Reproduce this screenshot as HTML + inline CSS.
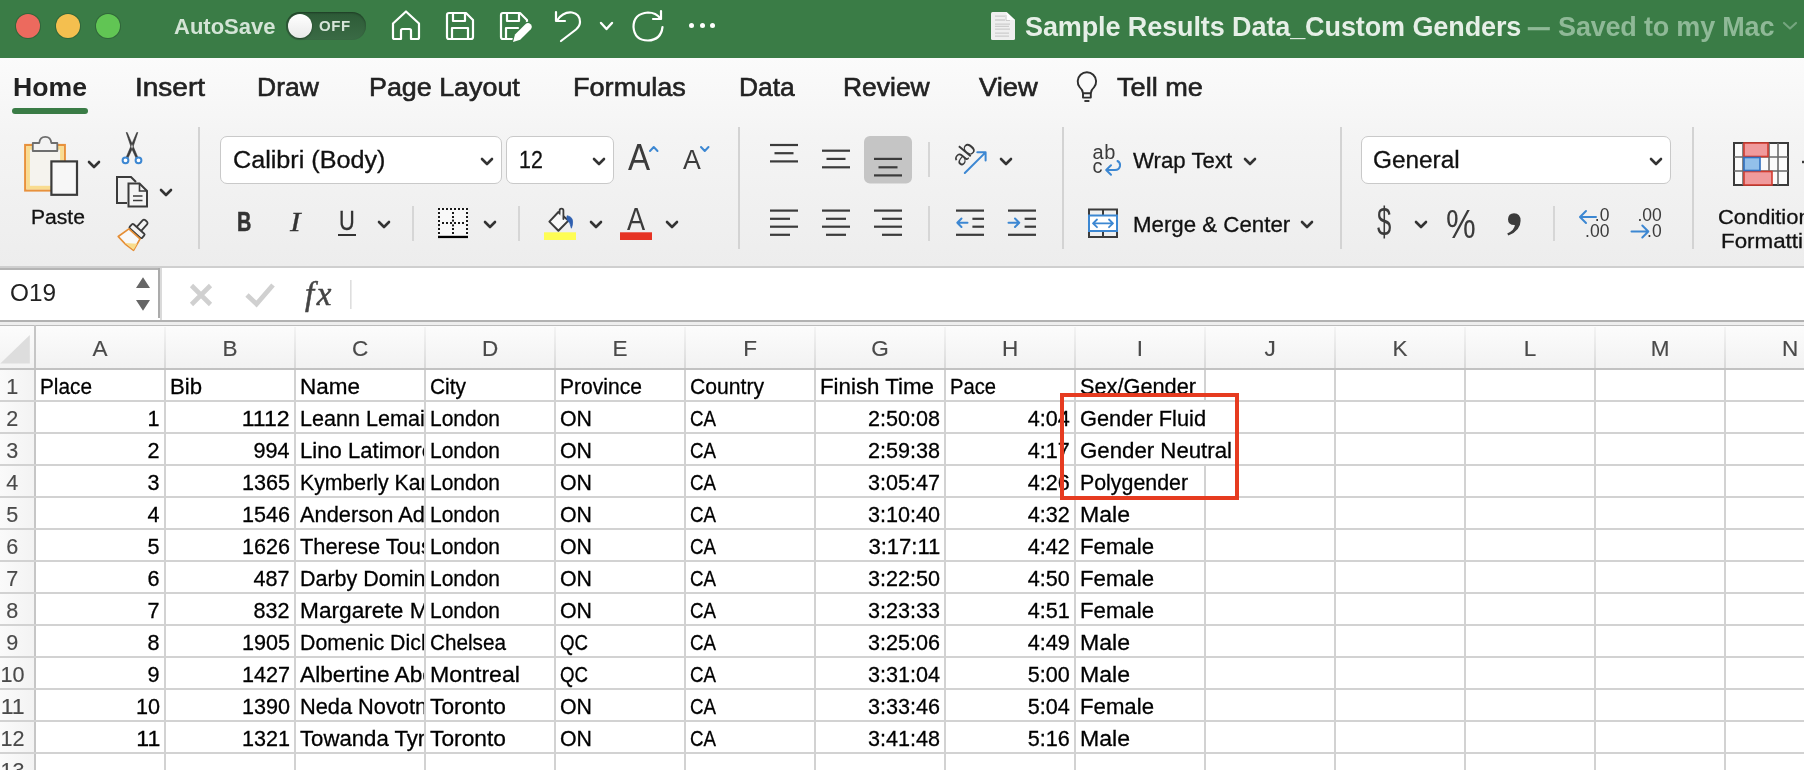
<!DOCTYPE html>
<html lang="en"><head><meta charset="utf-8"><title>Sample Results Data_Custom Genders</title>
<style>
*{margin:0;padding:0;box-sizing:border-box}
html,body{width:1804px;height:770px;overflow:hidden;background:#f0f0f0;font-family:"Liberation Sans",sans-serif;color:#1f1f1f}
#app{position:absolute;left:0;top:0;width:1804px;height:770px;overflow:hidden;will-change:transform}
.abs,.t,svg.i{position:absolute}
.t{white-space:nowrap;line-height:1}
#title{position:absolute;left:0;top:0;width:1804px;height:58px;background:#3a7c46}
#tabs{position:absolute;left:0;top:58px;width:1804px;height:208px;background:linear-gradient(#fbfbfb 0,#f4f4f4 38%,#ededed 100%)}
#ribbon{display:none}
.dot{position:absolute;top:14px;width:24px;height:24px;border-radius:50%}
.tab{position:absolute;top:71.5px;font-size:26px;line-height:30px;color:#222;-webkit-text-stroke:0.6px #222;white-space:nowrap;transform-origin:0 50%}
.vsep{position:absolute;width:2px;background:#d3d3d3;top:127px;height:122px}
.ssep{position:absolute;width:2px;background:#d6d6d6;top:206px;height:35px}
.box{position:absolute;top:136px;height:48px;background:#fff;border:1.5px solid #c9c9c9;border-radius:7px}
.rt{position:absolute;white-space:nowrap;color:#111;line-height:1;transform-origin:0 50%;-webkit-text-stroke:0.3px}
svg.i{overflow:visible}
.chev{position:absolute;width:12px;height:8px;overflow:visible}

.hd{font-size:22.5px;line-height:25.85px;color:#4a4a4a;text-align:center;-webkit-text-stroke:0.15px #4a4a4a}
.c{position:absolute;width:128px;height:30px;overflow:hidden;white-space:nowrap;font-size:22.5px;line-height:25.85px;color:#000;padding-top:3.6px;-webkit-text-stroke:0.3px #000}
.c span{display:inline-block}
.c.l{padding-left:4.4px}.c.l span{transform-origin:0 50%}
.c.r{text-align:right;padding-right:4px}.c.r span{transform-origin:100% 50%}
</style></head><body>
<div id="app"><div id="title">
<div class="dot" style="left:16px;background:#ec6a5e;box-shadow:0 0 0 1px rgba(0,0,0,.18)"></div>
<div class="dot" style="left:56px;background:#f4bf4f;box-shadow:0 0 0 1px rgba(0,0,0,.18)"></div>
<div class="dot" style="left:96px;background:#61c554;box-shadow:0 0 0 1px rgba(0,0,0,.18)"></div>
<div class="t" style="left:174px;top:14px;font-size:22px;line-height:26px;font-weight:bold;color:#d3e4d6;letter-spacing:0px">AutoSave</div>
<div class="abs" style="left:286px;top:12px;width:80px;height:28px;border-radius:14px;background:linear-gradient(#2c5a36,#3a6b45);box-shadow:inset 0 1px 2px rgba(0,0,0,.35)"></div>
<div class="abs" style="left:288px;top:14px;width:24px;height:24px;border-radius:50%;background:linear-gradient(#ffffff,#e9e9e9);box-shadow:0 1px 2px rgba(0,0,0,.4)"></div>
<div class="t" style="left:319px;top:18px;font-size:15px;line-height:16px;font-weight:bold;color:#d6e5d9;letter-spacing:0.6px">OFF</div>
<svg class="i" style="left:390px;top:8px" width="32" height="34" viewBox="0 0 32 34"><path d="M3 15.5 L16 3.5 L29 15.5 V29.5 Q29 31 27.5 31 H21 V22.5 Q21 21 19.5 21 H12.5 Q11 21 11 22.5 V31 H4.5 Q3 31 3 29.5 Z" stroke="#fff" fill="none" stroke-width="2.2" stroke-linejoin="round" stroke-linecap="round"/></svg>
<svg class="i" style="left:444px;top:10px" width="32" height="32" viewBox="0 0 32 32"><path d="M5 3 H22 L29 10 V27 Q29 29 27 29 H5 Q3 29 3 27 V5 Q3 3 5 3 Z" stroke="#fff" fill="none" stroke-width="2.2" stroke-linejoin="round" stroke-linecap="round"/><path d="M9 3 V11 H21 V3" stroke="#fff" fill="none" stroke-width="2.2" stroke-linejoin="round" stroke-linecap="round"/><path d="M8 29 V18 H24 V29" stroke="#fff" fill="none" stroke-width="2.2" stroke-linejoin="round" stroke-linecap="round"/></svg>
<svg class="i" style="left:498px;top:10px" width="36" height="34" viewBox="0 0 36 34"><path d="M16 29 H5 Q3 29 3 27 V5 Q3 3 5 3 H22 L29 10 V14" stroke="#fff" fill="none" stroke-width="2.2" stroke-linejoin="round" stroke-linecap="round"/><path d="M9 3 V11 H21 V3" stroke="#fff" fill="none" stroke-width="2.2" stroke-linejoin="round" stroke-linecap="round"/><path d="M8 29 V18 H20" stroke="#fff" fill="none" stroke-width="2.2" stroke-linejoin="round" stroke-linecap="round"/><path d="M15 32 L17 24.6 L27.6 14 Q30 11.9 32.6 14.2 Q34.9 16.8 32.8 19.2 L22.2 29.8 Z" fill="#fff" stroke="#3a7c46" stroke-width="2.4" stroke-linejoin="round" paint-order="stroke"/></svg>
<svg class="i" style="left:553px;top:8px" width="32" height="36" viewBox="0 0 32 36"><path d="M3 4 V13 H12" stroke="#fff" fill="none" stroke-width="2.2" stroke-linejoin="round" stroke-linecap="round"/><path d="M4 12.5 Q10 3.5 19 4.5 Q27 6 27 14 Q27 18 23 21.5 L8 33" stroke="#fff" fill="none" stroke-width="2.2" stroke-linejoin="round" stroke-linecap="round"/></svg>
<svg class="chev" style="left:600px;top:22px;width:13px;height:8px" viewBox="0 0 13 8"><polyline points="1,1 6.5,7 12,1" fill="none" stroke="#fff" stroke-width="2.4" stroke-linecap="round" stroke-linejoin="round"/></svg>
<svg class="i" style="left:630px;top:8px" width="36" height="36" viewBox="0 0 36 36"><path d="M31 3 V11 H23" stroke="#fff" fill="none" stroke-width="2.2" stroke-linejoin="round" stroke-linecap="round"/><path d="M30.5 10.5 Q26 4.5 18 4.5 Q3.5 5.5 3.5 19 Q4.5 32.5 18 32.5 Q31 32 32.5 19" stroke="#fff" fill="none" stroke-width="2.2" stroke-linejoin="round" stroke-linecap="round"/></svg>
<div class="abs" style="left:689px;top:23.2px;width:5px;height:5px;border-radius:50%;background:#fff"></div>
<div class="abs" style="left:699.5px;top:23.2px;width:5px;height:5px;border-radius:50%;background:#fff"></div>
<div class="abs" style="left:710px;top:23.2px;width:5px;height:5px;border-radius:50%;background:#fff"></div>
<svg class="i" style="left:990px;top:11px" width="26" height="30" viewBox="0 0 26 30"><path d="M2.5 1 H16.5 L25 9 V27.5 Q25 29 23.5 29 H2.5 Q1 29 1 27.5 V2.5 Q1 1 2.5 1 Z" fill="#efefef"/><path d="M16.5 1 V7.5 Q16.5 9 18 9 H25 Z" fill="#fdfdfd"/><path d="M16 4 V9.5 H20" fill="none" stroke="#c4c4c4" stroke-width="0.8"/><g stroke="#cdcdcd" stroke-width="1.3"><path d="M5 5.2 H15 M5 9 H15 M5 13.1 H20 M5 15.3 H19 M5 18.2 H20 M5 22.1 H19 M5 25.2 H19"/></g></svg>
<div class="t" style="left:1025px;top:11.5px;font-size:27px;line-height:30px;font-weight:bold;color:#e6efe7;letter-spacing:-0.1px" id="ttl">Sample Results Data_Custom Genders</div>
<div class="t" style="left:1528px;top:11.5px;font-size:27px;line-height:30px;font-weight:bold;color:#8fb997;letter-spacing:-0.2px" id="ttl2"><span style="display:inline-block;transform:scaleX(0.8);transform-origin:0 50%;margin-right:-4px;-webkit-text-stroke:0.5px">—</span> Saved to my Mac</div>
<svg class="chev" style="left:1783px;top:22px;width:14px;height:7.5px" viewBox="0 0 14 7.5"><polyline points="1,1 7.0,6.5 13,1" fill="none" stroke="#74a57e" stroke-width="2.2" stroke-linecap="round" stroke-linejoin="round"/></svg>
</div><div id="tabs"></div>
<div class="tab" style="transform:scaleX(1.024);left:13.00px;font-weight:bold;-webkit-text-stroke:0;">Home</div>
<div class="tab" style="transform:scaleX(1.077);left:135.00px;">Insert</div>
<div class="tab" style="transform:scaleX(1.019);left:257.00px;">Draw</div>
<div class="tab" style="transform:scaleX(1.033);left:369.00px;">Page Layout</div>
<div class="tab" style="transform:scaleX(1.042);left:573.00px;">Formulas</div>
<div class="tab" style="transform:scaleX(1.016);left:739.00px;">Data</div>
<div class="tab" style="transform:scaleX(1.017);left:843.00px;">Review</div>
<div class="tab" style="transform:scaleX(1.051);left:979.00px;">View</div>
<div class="tab" style="transform:scaleX(1.043);left:1117.00px;">Tell me</div>
<div class="abs" style="left:12px;top:108px;width:76px;height:6px;border-radius:3px;background:#3a7c46"></div>
<svg class="i" style="left:1074px;top:70px" width="26" height="36" viewBox="0 0 26 36"><path d="M9 23.2 Q8.8 20 5.85 17.41 A9.2 9.2 0 1 1 19.95 17.41 Q17 20 16.8 23.2 Z" fill="#f9f9f9" stroke="#2e2e2e" stroke-width="1.9" stroke-linejoin="round"/><path d="M9 23.2 V27.6 H16.8 V23.2" fill="none" stroke="#2e2e2e" stroke-width="1.9" stroke-linejoin="round"/><path d="M10.4 31 H15.4" stroke="#2e2e2e" stroke-width="1.9"/></svg><div id="ribbon"></div>
<svg class="i" style="left:0;top:0" width="1804" height="270" viewBox="0 0 1804 270">
<rect x="25.2" y="145" width="39.6" height="45.5" fill="#f5f3ee" stroke="#e8913c" stroke-width="2.2"/><rect x="28.1" y="147.9" width="33.8" height="39.7" fill="none" stroke="#f9dc90" stroke-width="3.6"/>
<path d="M32.8 151 V143 H39.3 Q39.8 136.8 45.3 136.8 Q50.8 136.8 51.3 143 H57.3 V151 Z" fill="#f3f3f3" stroke="#6e6e6e" stroke-width="1.8" stroke-linejoin="round"/>
<rect x="51.4" y="161.4" width="25.6" height="33.4" fill="#f7f7f7" stroke="#3b3b3b" stroke-width="2.2"/>
<path d="M126.2 132.5 L127.2 132.5 L134.3 149 L137.8 157.3 L136 158 L131.2 147.5 Z M137.8 132.5 L136.8 132.5 L129.7 149 L126.2 157.3 L128 158 L132.8 147.5 Z" fill="#3b3b3b" stroke="#3b3b3b" stroke-width="0.6" stroke-linejoin="round"/>
<circle cx="125.5" cy="160.3" r="2.9" fill="#fff" stroke="#3c87d2" stroke-width="2"/><circle cx="138.5" cy="160.3" r="2.9" fill="#fff" stroke="#3c87d2" stroke-width="2"/>
<path d="M127 203 H117 V177 H131 L136 182" fill="none" stroke="#3b3b3b" stroke-width="2" stroke-linejoin="miter"/>
<path d="M128.5 183.5 H139.5 L147 191 V206.5 H128.5 Z" fill="#f4f4f4" stroke="#3b3b3b" stroke-width="2" stroke-linejoin="miter"/><path d="M139.5 183.5 V191 H147" fill="none" stroke="#3b3b3b" stroke-width="1.6"/><path d="M133 196 H142.5 M133 200.5 H142.5" stroke="#3b3b3b" stroke-width="1.6"/>
<g transform="translate(132.75,235.8) rotate(42)"><rect x="-3" y="-20" width="6" height="12" rx="2" fill="#f4f4f4" stroke="#3b3b3b" stroke-width="1.8"/><rect x="-8.3" y="-9.2" width="16.6" height="5.6" rx="1.2" fill="#f4f4f4" stroke="#3b3b3b" stroke-width="1.8"/><path d="M-7.5 -2.6 H7.5 L10.3 10.3 Q0 12 -10.3 10.3 Z" fill="#f8f8f8" stroke="#e58e35" stroke-width="1.7" stroke-linejoin="round"/><path d="M-1 10.6 L10 9.8 L8.6 3 Z" fill="#f9dc8c"/></g>
<rect x="438" y="208" width="30" height="28" fill="#f9f9f9"/><g fill="#1a1a1a"><rect x="438" y="208" width="2" height="2"/><rect x="442" y="208" width="2" height="2"/><rect x="446" y="208" width="2" height="2"/><rect x="450" y="208" width="2" height="2"/><rect x="454" y="208" width="2" height="2"/><rect x="458" y="208" width="2" height="2"/><rect x="462" y="208" width="2" height="2"/><rect x="466" y="208" width="2" height="2"/><rect x="438" y="212" width="2" height="2"/><rect x="466" y="212" width="2" height="2"/><rect x="452" y="212" width="2" height="2"/><rect x="438" y="216" width="2" height="2"/><rect x="466" y="216" width="2" height="2"/><rect x="452" y="216" width="2" height="2"/><rect x="438" y="220" width="2" height="2"/><rect x="466" y="220" width="2" height="2"/><rect x="438" y="224" width="2" height="2"/><rect x="466" y="224" width="2" height="2"/><rect x="438" y="228" width="2" height="2"/><rect x="466" y="228" width="2" height="2"/><rect x="452" y="228" width="2" height="2"/><rect x="438" y="232" width="2" height="2"/><rect x="466" y="232" width="2" height="2"/><rect x="452" y="232" width="2" height="2"/><rect x="442" y="222" width="2" height="2"/><rect x="446" y="222" width="2" height="2"/><rect x="450" y="222" width="2" height="2"/><rect x="454" y="222" width="2" height="2"/><rect x="458" y="222" width="2" height="2"/><rect x="462" y="222" width="2" height="2"/><rect x="452" y="219.6" width="2" height="2"/><rect x="452" y="224.4" width="2" height="2"/></g><rect x="438" y="235.8" width="30" height="2.3" fill="#000"/>
<path d="M549.4 221.6 L558.4 212 L568.4 220.6 L558.4 230.8 Z" fill="#f8f8f8" stroke="#3b3b3b" stroke-width="2" stroke-linejoin="round"/><path d="M559.6 213.5 V210.6 Q559.6 208.7 561.5 208.7 Q563.4 208.7 563.4 210.6 V219" fill="#f8f8f8" stroke="#3b3b3b" stroke-width="1.8" stroke-linecap="round"/><path d="M567 215.8 Q572.6 216.5 572.6 222 Q572.6 225 571.4 228.2 Q570.5 222.5 567 219.8 Z" fill="#2f5fb0" stroke="#2f5fb0" stroke-width="0.8" stroke-linejoin="round"/>
<rect x="544" y="232.3" width="32" height="7.7" fill="#fefd54"/>
<rect x="620" y="232.3" width="32" height="7.7" fill="#e63323"/>
<rect x="770.0" y="143.9" width="28" height="2.2" fill="#3b3b3b"/><rect x="774.5" y="152.1" width="19" height="2.2" fill="#3b3b3b"/><rect x="770.0" y="160.3" width="28" height="2.2" fill="#3b3b3b"/>
<rect x="822.0" y="149.6" width="28" height="2.2" fill="#3b3b3b"/><rect x="826.5" y="157.8" width="19" height="2.2" fill="#3b3b3b"/><rect x="822.0" y="166.20000000000002" width="28" height="2.2" fill="#3b3b3b"/>
<rect x="864" y="136" width="48" height="47.5" rx="6" fill="#c5c5c5"/>
<rect x="874.0" y="157.8" width="28" height="2.2" fill="#3b3b3b"/><rect x="878.5" y="166.20000000000002" width="19" height="2.2" fill="#3b3b3b"/><rect x="874.0" y="174.3" width="28" height="2.2" fill="#3b3b3b"/>
<rect x="770" y="209.5" width="28" height="2.2" fill="#3b3b3b"/><rect x="770" y="217.70000000000002" width="20" height="2.2" fill="#3b3b3b"/><rect x="770" y="225.6" width="28" height="2.2" fill="#3b3b3b"/><rect x="770" y="233.70000000000002" width="20" height="2.2" fill="#3b3b3b"/>
<rect x="822.0" y="209.5" width="28" height="2.2" fill="#3b3b3b"/><rect x="826.0" y="217.70000000000002" width="20" height="2.2" fill="#3b3b3b"/><rect x="822.0" y="225.6" width="28" height="2.2" fill="#3b3b3b"/><rect x="826.0" y="233.70000000000002" width="20" height="2.2" fill="#3b3b3b"/>
<rect x="874" y="209.5" width="28" height="2.2" fill="#3b3b3b"/><rect x="882" y="217.70000000000002" width="20" height="2.2" fill="#3b3b3b"/><rect x="874" y="225.6" width="28" height="2.2" fill="#3b3b3b"/><rect x="882" y="233.70000000000002" width="20" height="2.2" fill="#3b3b3b"/>
<rect x="956" y="209.5" width="28" height="2.2" fill="#3b3b3b"/><rect x="972.4" y="217.70000000000002" width="11.6" height="2.2" fill="#3b3b3b"/><rect x="972.4" y="225.6" width="11.6" height="2.2" fill="#3b3b3b"/><rect x="956" y="233.70000000000002" width="28" height="2.2" fill="#3b3b3b"/>
<path d="M967.5 222.7 H957.3 M961.5 218.5 L957.3 222.7 L961.5 227" fill="none" stroke="#3c87d2" stroke-width="2" stroke-linecap="round" stroke-linejoin="round"/>
<rect x="1008" y="209.5" width="28" height="2.2" fill="#3b3b3b"/><rect x="1024.6" y="217.70000000000002" width="11.4" height="2.2" fill="#3b3b3b"/><rect x="1024.6" y="225.6" width="11.4" height="2.2" fill="#3b3b3b"/><rect x="1008" y="233.70000000000002" width="28" height="2.2" fill="#3b3b3b"/>
<path d="M1008.5 222.7 H1019 M1015 218.5 L1019.2 222.7 L1015 227" fill="none" stroke="#3c87d2" stroke-width="2" stroke-linecap="round" stroke-linejoin="round"/>
<text x="0" y="0" transform="translate(961.5,167.2) rotate(-50)" font-family="Liberation Sans, sans-serif" font-size="21.5" fill="#3b3b3b">ab</text>
<path d="M964.8 173 L985.3 152.6 M977.3 152.3 H985.6 V160.6" fill="none" stroke="#3c87d2" stroke-width="2" stroke-linecap="round" stroke-linejoin="round"/>
<text x="1092.5" y="159" font-family="Liberation Sans, sans-serif" font-size="20" fill="#3b3b3b" letter-spacing="0.6">ab</text><text x="1092.5" y="173.3" font-family="Liberation Sans, sans-serif" font-size="20" fill="#3b3b3b">c</text>
<path d="M1117.5 161 Q1120.5 162.5 1120 166 Q1119.3 170 1115 170 H1106.5 M1111 165.3 L1106.2 170 L1111 174.8" fill="none" stroke="#3c87d2" stroke-width="2" stroke-linecap="round" stroke-linejoin="round"/>
<g fill="none" stroke="#3b3b3b" stroke-width="2"><path d="M1089 216 V209.5 H1117 V216 M1103 209.5 V216 M1089 231 V237 H1117 V231 M1103 231 V237"/></g><rect x="1089" y="215.5" width="28" height="15.5" fill="#fff" stroke="#3c87d2" stroke-width="2"/><path d="M1093 223.3 H1113 M1097 219.5 L1093 223.3 L1097 227.2 M1109 219.5 L1113 223.3 L1109 227.2" fill="none" stroke="#3c87d2" stroke-width="1.8" stroke-linecap="round" stroke-linejoin="round"/>
<text x="1594.8" y="220.9" font-family="Liberation Sans, sans-serif" font-size="17.5" fill="#3b3b3b">.0</text><text x="1585.1" y="237.1" font-family="Liberation Sans, sans-serif" font-size="17.5" fill="#3b3b3b">.00</text>
<path d="M1596 217 H1580.3 M1586 211 L1580 217 L1586 223" fill="none" stroke="#3c87d2" stroke-width="2" stroke-linecap="round" stroke-linejoin="round"/>
<text x="1637.4" y="220.9" font-family="Liberation Sans, sans-serif" font-size="17.5" fill="#3b3b3b">.00</text><text x="1647.1" y="237.1" font-family="Liberation Sans, sans-serif" font-size="17.5" fill="#3b3b3b">.0</text>
<path d="M1631.5 231.5 H1648 M1642.3 225.5 L1648.3 231.5 L1642.3 237.5" fill="none" stroke="#3c87d2" stroke-width="2" stroke-linecap="round" stroke-linejoin="round"/>
<rect x="1734" y="143" width="54" height="42" fill="#fbfbfb" stroke="#3b3b3b" stroke-width="2"/><path d="M1734 157 H1788 M1734 171 H1788 M1743 143 V185 M1769 143 V185 M1778 143 V185" stroke="#6a6a6a" stroke-width="1.6" fill="none"/>
<rect x="1744" y="143" width="24" height="13.5" fill="#f09a9c" stroke="#d23b30" stroke-width="1.6"/><rect x="1744" y="171.5" width="28" height="13.5" fill="#f09a9c" stroke="#d23b30" stroke-width="1.6"/><rect x="1744" y="157.5" width="16" height="13" fill="#93c0ea" stroke="#2f6fc0" stroke-width="1.6"/>
<rect x="1802" y="160.8" width="3" height="2.4" fill="#3b3b3b"/>
<path d="M1514 213.2 Q1520.6 213.2 1520.6 220.8 Q1520.6 230.8 1508.3 235.6 L1507.2 233.5 Q1514.6 230 1514.9 225 Q1508 225.2 1508 219.2 Q1508.3 213.2 1514 213.2 Z" fill="#3b3b3b"/>
</svg>
<div class="vsep" style="left:198px"></div>
<div class="vsep" style="left:738px"></div>
<div class="vsep" style="left:1062px"></div>
<div class="vsep" style="left:1340px"></div>
<div class="vsep" style="left:1692px"></div>
<div class="ssep" style="left:412px"></div>
<div class="ssep" style="left:518px"></div>
<div class="ssep" style="left:928px"></div>
<div class="ssep" style="left:1553px"></div>
<div class="ssep" style="left:928px;top:142px"></div>
<div class="box" style="left:220px;width:282px"></div>
<div class="box" style="left:506px;width:108px"></div>
<div class="box" style="left:1361px;width:310px"></div>
<div class="rt" style="transform:scaleX(1.029);left:30.60px;top:204.85px;font-size:20.5px;line-height:23.55px;">Paste</div>
<div class="rt" style="transform:scaleX(1.071);left:232.50px;top:146.73px;font-size:23.5px;line-height:27.00px;">Calibri (Body)</div>
<div class="rt" style="transform:scaleX(0.909);left:518.60px;top:146.73px;font-size:23.5px;line-height:27.00px;">12</div>
<div class="rt" style="transform:scaleX(1.036);left:1373.30px;top:146.73px;font-size:23.5px;line-height:27.00px;">General</div>
<div class="rt" style="transform:scaleX(1.033);left:1132.70px;top:148.54px;font-size:21.5px;line-height:24.70px;">Wrap Text</div>
<div class="rt" style="transform:scaleX(1.036);left:1132.70px;top:212.84px;font-size:21.5px;line-height:24.70px;">Merge &amp; Center</div>
<div class="rt" style="transform:scaleX(1.044);left:1718.00px;top:204.69px;font-size:21px;line-height:24.13px;">Condition</div>
<div class="rt" style="transform:scaleX(1.064);left:1720.50px;top:228.80px;font-size:21px;line-height:24.13px;">Formatti</div>
<div class="rt" style="transform:scaleX(0.736);left:237.30px;top:206.56px;font-size:27px;line-height:31.02px;font-weight:bold;color:#333;-webkit-text-stroke:0.5px #333">B</div>
<div class="rt" style="left:289.5px;top:206.56px;font-size:27px;line-height:31.02px;font-family:'Liberation Serif',serif;font-style:italic;color:#333;transform:scaleX(1.18)">I</div>
<div class="rt" style="transform:scaleX(0.779);left:339.30px;top:205.46px;font-size:28px;line-height:32.17px;color:#333">U</div>
<div class="abs" style="left:338px;top:234px;width:18px;height:2px;background:#333"></div>
<div class="rt" style="transform:scaleX(0.920);left:627.70px;top:137.22px;font-size:36px;line-height:41.36px;color:#3b3b3b;-webkit-text-stroke:0">A</div>
<div class="rt" style="transform:scaleX(0.989);left:683.00px;top:145.37px;font-size:27px;line-height:31.02px;color:#3b3b3b;-webkit-text-stroke:0">A</div>
<svg class="chev" style="left:648.6px;top:146px;width:9.5px;height:6px" viewBox="0 0 9.5 6"><polyline points="1,5 4.75,1 8.5,5" fill="none" stroke="#3c87d2" stroke-width="2" stroke-linecap="round" stroke-linejoin="round"/></svg>
<svg class="chev" style="left:700.2px;top:146px;width:9.5px;height:6px" viewBox="0 0 9.5 6"><polyline points="1,1 4.75,5 8.5,1" fill="none" stroke="#3c87d2" stroke-width="2" stroke-linecap="round" stroke-linejoin="round"/></svg>
<div class="rt" style="transform:scaleX(0.849);left:627.30px;top:200.64px;font-size:32px;line-height:36.77px;color:#3b3b3b;-webkit-text-stroke:0">A</div>
<div class="rt" style="transform:scaleX(0.643);left:1376.60px;top:199.80px;font-size:40px;line-height:45.96px;color:#3b3b3b;-webkit-text-stroke:0">$</div>
<div class="rt" style="transform:scaleX(0.837);left:1446.00px;top:202.10px;font-size:40px;line-height:45.96px;color:#3b3b3b;-webkit-text-stroke:0">%</div>
<svg class="chev" style="left:88px;top:161px;width:12px;height:7px" viewBox="0 0 12 7"><polyline points="1,1 6.0,6 11,1" fill="none" stroke="#333" stroke-width="2.6" stroke-linecap="round" stroke-linejoin="round"/></svg>
<svg class="chev" style="left:160px;top:189px;width:12px;height:7px" viewBox="0 0 12 7"><polyline points="1,1 6.0,6 11,1" fill="none" stroke="#333" stroke-width="2.6" stroke-linecap="round" stroke-linejoin="round"/></svg>
<svg class="chev" style="left:481px;top:158px;width:12px;height:7px" viewBox="0 0 12 7"><polyline points="1,1 6.0,6 11,1" fill="none" stroke="#333" stroke-width="2.6" stroke-linecap="round" stroke-linejoin="round"/></svg>
<svg class="chev" style="left:593px;top:158px;width:12px;height:7px" viewBox="0 0 12 7"><polyline points="1,1 6.0,6 11,1" fill="none" stroke="#333" stroke-width="2.6" stroke-linecap="round" stroke-linejoin="round"/></svg>
<svg class="chev" style="left:378px;top:221px;width:12px;height:7px" viewBox="0 0 12 7"><polyline points="1,1 6.0,6 11,1" fill="none" stroke="#333" stroke-width="2.6" stroke-linecap="round" stroke-linejoin="round"/></svg>
<svg class="chev" style="left:484px;top:221px;width:12px;height:7px" viewBox="0 0 12 7"><polyline points="1,1 6.0,6 11,1" fill="none" stroke="#333" stroke-width="2.6" stroke-linecap="round" stroke-linejoin="round"/></svg>
<svg class="chev" style="left:590px;top:221px;width:12px;height:7px" viewBox="0 0 12 7"><polyline points="1,1 6.0,6 11,1" fill="none" stroke="#333" stroke-width="2.6" stroke-linecap="round" stroke-linejoin="round"/></svg>
<svg class="chev" style="left:666px;top:221px;width:12px;height:7px" viewBox="0 0 12 7"><polyline points="1,1 6.0,6 11,1" fill="none" stroke="#333" stroke-width="2.6" stroke-linecap="round" stroke-linejoin="round"/></svg>
<svg class="chev" style="left:1000px;top:158px;width:12px;height:7px" viewBox="0 0 12 7"><polyline points="1,1 6.0,6 11,1" fill="none" stroke="#333" stroke-width="2.6" stroke-linecap="round" stroke-linejoin="round"/></svg>
<svg class="chev" style="left:1244px;top:158px;width:12px;height:7px" viewBox="0 0 12 7"><polyline points="1,1 6.0,6 11,1" fill="none" stroke="#333" stroke-width="2.6" stroke-linecap="round" stroke-linejoin="round"/></svg>
<svg class="chev" style="left:1301px;top:221px;width:12px;height:7px" viewBox="0 0 12 7"><polyline points="1,1 6.0,6 11,1" fill="none" stroke="#333" stroke-width="2.6" stroke-linecap="round" stroke-linejoin="round"/></svg>
<svg class="chev" style="left:1650px;top:158px;width:12px;height:7px" viewBox="0 0 12 7"><polyline points="1,1 6.0,6 11,1" fill="none" stroke="#333" stroke-width="2.6" stroke-linecap="round" stroke-linejoin="round"/></svg>
<svg class="chev" style="left:1414.6px;top:221px;width:12px;height:7px" viewBox="0 0 12 7"><polyline points="1,1 6.0,6 11,1" fill="none" stroke="#333" stroke-width="2.6" stroke-linecap="round" stroke-linejoin="round"/></svg><div class="abs" style="left:0;top:266px;width:1804px;height:2px;background:#cfcfcf"></div>
<div class="abs" style="left:0;top:268px;width:1804px;height:52px;background:#fff"></div>
<div class="abs" style="left:0;top:268px;width:160px;height:2px;background:#b4b4b4"></div>
<div class="abs" style="left:158px;top:268px;width:2px;height:50px;background:#ababab"></div>
<div class="abs" style="left:160px;top:268px;width:2px;height:52px;background:#dadada"></div>
<div class="abs" style="left:0;top:320px;width:1804px;height:6px;background:linear-gradient(#b2b2b2 0,#b2b2b2 26%,#eeeeee 26%,#eeeeee 78%,#bcbcbc 78%)"></div>
<div class="t" style="left:10px;top:279.23px;font-size:24.5px;line-height:28.15px;color:#222;transform:scaleX(0.993);transform-origin:0 50%">O19</div>
<svg class="i" style="left:0;top:268px" width="400" height="53" viewBox="0 268 400 53"><path d="M143 277.3 L150 288 H136 Z M143 310.8 L150 300 H136 Z" fill="#666"/><path d="M191.5 285.5 L210.5 304.5 M210.5 285.5 L191.5 304.5" stroke="#d0d0d0" stroke-width="4.6" fill="none"/><path d="M247 295 L256.5 304 L273 285" stroke="#d0d0d0" stroke-width="4.8" fill="none"/><rect x="350" y="280" width="1.6" height="29" fill="#dedede"/></svg>
<div class="t" style="left:305px;top:276px;font-family:'Liberation Serif',serif;font-style:italic;font-size:33px;line-height:36px;color:#444;letter-spacing:2.5px;-webkit-text-stroke:0.5px #444">fx</div>
<div class="abs" style="left:0;top:326px;width:1804px;height:43px;background:linear-gradient(#fcfcfc,#f2f2f2)"></div>
<div class="abs" style="left:0;top:369px;width:1804px;height:401px;background:#fff"></div>
<div class="abs" style="left:0;top:369px;width:35px;height:401px;background:linear-gradient(90deg,#fafafa,#f3f3f3)"></div>
<svg class="i" style="left:0;top:325px" width="1804" height="445" viewBox="0 325 1804 445"><defs><linearGradient id="hs" x1="0" y1="0" x2="0" y2="1"><stop offset="0" stop-color="#f4f4f4"/><stop offset="1" stop-color="#d9d9d9"/></linearGradient></defs><path d="M0.3 363.5 L29.8 335 V363.5 Z" fill="#dddddd"/><rect x="164" y="327" width="2" height="42" fill="url(#hs)"/><rect x="294" y="327" width="2" height="42" fill="url(#hs)"/><rect x="424" y="327" width="2" height="42" fill="url(#hs)"/><rect x="554" y="327" width="2" height="42" fill="url(#hs)"/><rect x="684" y="327" width="2" height="42" fill="url(#hs)"/><rect x="814" y="327" width="2" height="42" fill="url(#hs)"/><rect x="944" y="327" width="2" height="42" fill="url(#hs)"/><rect x="1074" y="327" width="2" height="42" fill="url(#hs)"/><rect x="1204" y="327" width="2" height="42" fill="url(#hs)"/><rect x="1334" y="327" width="2" height="42" fill="url(#hs)"/><rect x="1464" y="327" width="2" height="42" fill="url(#hs)"/><rect x="1594" y="327" width="2" height="42" fill="url(#hs)"/><rect x="1724" y="327" width="2" height="42" fill="url(#hs)"/><rect x="1854" y="327" width="2" height="42" fill="url(#hs)"/><rect x="164" y="369" width="2" height="401" fill="#d2d2d2"/><rect x="294" y="369" width="2" height="401" fill="#d2d2d2"/><rect x="424" y="369" width="2" height="401" fill="#d2d2d2"/><rect x="554" y="369" width="2" height="401" fill="#d2d2d2"/><rect x="684" y="369" width="2" height="401" fill="#d2d2d2"/><rect x="814" y="369" width="2" height="401" fill="#d2d2d2"/><rect x="944" y="369" width="2" height="401" fill="#d2d2d2"/><rect x="1074" y="369" width="2" height="401" fill="#d2d2d2"/><rect x="1204" y="369" width="2" height="401" fill="#d2d2d2"/><rect x="1334" y="369" width="2" height="401" fill="#d2d2d2"/><rect x="1464" y="369" width="2" height="401" fill="#d2d2d2"/><rect x="1594" y="369" width="2" height="401" fill="#d2d2d2"/><rect x="1724" y="369" width="2" height="401" fill="#d2d2d2"/><rect x="1854" y="369" width="2" height="401" fill="#d2d2d2"/><rect x="34" y="325" width="2" height="445" fill="#c6c6c6"/><rect x="0" y="368" width="1804" height="2" fill="#d2d2d2"/><rect x="0" y="400" width="1804" height="2" fill="#d2d2d2"/><rect x="0" y="432" width="1804" height="2" fill="#d2d2d2"/><rect x="0" y="464" width="1804" height="2" fill="#d2d2d2"/><rect x="0" y="496" width="1804" height="2" fill="#d2d2d2"/><rect x="0" y="528" width="1804" height="2" fill="#d2d2d2"/><rect x="0" y="560" width="1804" height="2" fill="#d2d2d2"/><rect x="0" y="592" width="1804" height="2" fill="#d2d2d2"/><rect x="0" y="624" width="1804" height="2" fill="#d2d2d2"/><rect x="0" y="656" width="1804" height="2" fill="#d2d2d2"/><rect x="0" y="688" width="1804" height="2" fill="#d2d2d2"/><rect x="0" y="720" width="1804" height="2" fill="#d2d2d2"/><rect x="0" y="752" width="1804" height="2" fill="#d2d2d2"/><rect x="0" y="784" width="1804" height="2" fill="#d2d2d2"/><rect x="0" y="368" width="1804" height="2" fill="#c2c2c2"/></svg>
<div class="t hd" style="left:80px;top:335.6px;width:40px">A</div>
<div class="t hd" style="left:210px;top:335.6px;width:40px">B</div>
<div class="t hd" style="left:340px;top:335.6px;width:40px">C</div>
<div class="t hd" style="left:470px;top:335.6px;width:40px">D</div>
<div class="t hd" style="left:600px;top:335.6px;width:40px">E</div>
<div class="t hd" style="left:730px;top:335.6px;width:40px">F</div>
<div class="t hd" style="left:860px;top:335.6px;width:40px">G</div>
<div class="t hd" style="left:990px;top:335.6px;width:40px">H</div>
<div class="t hd" style="left:1120px;top:335.6px;width:40px">I</div>
<div class="t hd" style="left:1250px;top:335.6px;width:40px">J</div>
<div class="t hd" style="left:1380px;top:335.6px;width:40px">K</div>
<div class="t hd" style="left:1510px;top:335.6px;width:40px">L</div>
<div class="t hd" style="left:1640px;top:335.6px;width:40px">M</div>
<div class="t hd" style="left:1770px;top:335.6px;width:40px">N</div>
<div class="t hd" style="left:-7.4px;top:373.6px;width:40px"><span style="display:inline-block;transform:scaleX(0.959)">1</span></div>
<div class="t hd" style="left:-7.4px;top:405.6px;width:40px"><span style="display:inline-block;transform:scaleX(0.959)">2</span></div>
<div class="t hd" style="left:-7.4px;top:437.6px;width:40px"><span style="display:inline-block;transform:scaleX(0.959)">3</span></div>
<div class="t hd" style="left:-7.4px;top:469.6px;width:40px"><span style="display:inline-block;transform:scaleX(0.959)">4</span></div>
<div class="t hd" style="left:-7.4px;top:501.6px;width:40px"><span style="display:inline-block;transform:scaleX(0.959)">5</span></div>
<div class="t hd" style="left:-7.4px;top:533.6px;width:40px"><span style="display:inline-block;transform:scaleX(0.959)">6</span></div>
<div class="t hd" style="left:-7.4px;top:565.6px;width:40px"><span style="display:inline-block;transform:scaleX(0.959)">7</span></div>
<div class="t hd" style="left:-7.4px;top:597.6px;width:40px"><span style="display:inline-block;transform:scaleX(0.959)">8</span></div>
<div class="t hd" style="left:-7.4px;top:629.6px;width:40px"><span style="display:inline-block;transform:scaleX(0.959)">9</span></div>
<div class="t hd" style="left:-7.4px;top:661.6px;width:40px"><span style="display:inline-block;transform:scaleX(0.959)">10</span></div>
<div class="t hd" style="left:-7.4px;top:693.6px;width:40px"><span style="display:inline-block;transform:scaleX(1.027)">11</span></div>
<div class="t hd" style="left:-7.4px;top:725.6px;width:40px"><span style="display:inline-block;transform:scaleX(0.959)">12</span></div>
<div class="t hd" style="left:-7.4px;top:757.6px;width:40px"><span style="display:inline-block;transform:scaleX(0.959)">13</span></div>
<div class="c l" style="left:36px;top:370px"><span style="transform:scaleX(0.924)">Place</span></div>
<div class="c l" style="left:166px;top:370px"><span style="transform:scaleX(0.984)">Bib</span></div>
<div class="c l" style="left:296px;top:370px"><span style="transform:scaleX(0.999)">Name</span></div>
<div class="c l" style="left:426px;top:370px"><span style="transform:scaleX(0.929)">City</span></div>
<div class="c l" style="left:556px;top:370px"><span style="transform:scaleX(0.937)">Province</span></div>
<div class="c l" style="left:686px;top:370px"><span style="transform:scaleX(0.939)">Country</span></div>
<div class="c l" style="left:816px;top:370px"><span style="transform:scaleX(0.991)">Finish Time</span></div>
<div class="c l" style="left:946px;top:370px"><span style="transform:scaleX(0.897)">Pace</span></div>
<div class="c l" style="left:1076px;top:370px"><span style="transform:scaleX(0.966)">Sex/Gender</span></div>
<div class="c r" style="left:36px;top:402px"><span style="transform:scaleX(0.959)">1</span></div>
<div class="c r" style="left:166px;top:402px"><span style="transform:scaleX(1.027)">1112</span></div>
<div class="c l" style="left:296px;top:402px"><span style="transform:scaleX(0.959)">Leann Lemaire</span></div>
<div class="c l" style="left:426px;top:402px"><span style="transform:scaleX(0.932)">London</span></div>
<div class="c l" style="left:556px;top:402px"><span style="transform:scaleX(0.948)">ON</span></div>
<div class="c l" style="left:686px;top:402px"><span style="transform:scaleX(0.832)">CA</span></div>
<div class="c r" style="left:816px;top:402px"><span style="transform:scaleX(0.959)">2:50:08</span></div>
<div class="c r" style="left:946px;top:402px"><span style="transform:scaleX(0.959)">4:04</span></div>
<div class="c l" style="left:1076px;top:402px;overflow:visible;width:258px;background:#fff"><span style="transform:scaleX(0.969)">Gender Fluid</span></div>
<div class="c r" style="left:36px;top:434px"><span style="transform:scaleX(0.959)">2</span></div>
<div class="c r" style="left:166px;top:434px"><span style="transform:scaleX(0.959)">994</span></div>
<div class="c l" style="left:296px;top:434px"><span style="transform:scaleX(0.983)">Lino Latimore</span></div>
<div class="c l" style="left:426px;top:434px"><span style="transform:scaleX(0.932)">London</span></div>
<div class="c l" style="left:556px;top:434px"><span style="transform:scaleX(0.948)">ON</span></div>
<div class="c l" style="left:686px;top:434px"><span style="transform:scaleX(0.832)">CA</span></div>
<div class="c r" style="left:816px;top:434px"><span style="transform:scaleX(0.959)">2:59:38</span></div>
<div class="c r" style="left:946px;top:434px"><span style="transform:scaleX(0.959)">4:17</span></div>
<div class="c l" style="left:1076px;top:434px;overflow:visible;width:258px;background:#fff"><span style="transform:scaleX(0.988)">Gender Neutral</span></div>
<div class="c r" style="left:36px;top:466px"><span style="transform:scaleX(0.959)">3</span></div>
<div class="c r" style="left:166px;top:466px"><span style="transform:scaleX(0.959)">1365</span></div>
<div class="c l" style="left:296px;top:466px"><span style="transform:scaleX(0.945)">Kymberly Karns</span></div>
<div class="c l" style="left:426px;top:466px"><span style="transform:scaleX(0.932)">London</span></div>
<div class="c l" style="left:556px;top:466px"><span style="transform:scaleX(0.948)">ON</span></div>
<div class="c l" style="left:686px;top:466px"><span style="transform:scaleX(0.832)">CA</span></div>
<div class="c r" style="left:816px;top:466px"><span style="transform:scaleX(0.959)">3:05:47</span></div>
<div class="c r" style="left:946px;top:466px"><span style="transform:scaleX(0.959)">4:26</span></div>
<div class="c l" style="left:1076px;top:466px"><span style="transform:scaleX(0.949)">Polygender</span></div>
<div class="c r" style="left:36px;top:498px"><span style="transform:scaleX(0.959)">4</span></div>
<div class="c r" style="left:166px;top:498px"><span style="transform:scaleX(0.959)">1546</span></div>
<div class="c l" style="left:296px;top:498px"><span style="transform:scaleX(0.969)">Anderson Adams</span></div>
<div class="c l" style="left:426px;top:498px"><span style="transform:scaleX(0.932)">London</span></div>
<div class="c l" style="left:556px;top:498px"><span style="transform:scaleX(0.948)">ON</span></div>
<div class="c l" style="left:686px;top:498px"><span style="transform:scaleX(0.832)">CA</span></div>
<div class="c r" style="left:816px;top:498px"><span style="transform:scaleX(0.959)">3:10:40</span></div>
<div class="c r" style="left:946px;top:498px"><span style="transform:scaleX(0.959)">4:32</span></div>
<div class="c l" style="left:1076px;top:498px"><span style="transform:scaleX(1.025)">Male</span></div>
<div class="c r" style="left:36px;top:530px"><span style="transform:scaleX(0.959)">5</span></div>
<div class="c r" style="left:166px;top:530px"><span style="transform:scaleX(0.959)">1626</span></div>
<div class="c l" style="left:296px;top:530px"><span style="transform:scaleX(0.970)">Therese Toussaint</span></div>
<div class="c l" style="left:426px;top:530px"><span style="transform:scaleX(0.932)">London</span></div>
<div class="c l" style="left:556px;top:530px"><span style="transform:scaleX(0.948)">ON</span></div>
<div class="c l" style="left:686px;top:530px"><span style="transform:scaleX(0.832)">CA</span></div>
<div class="c r" style="left:816px;top:530px"><span style="transform:scaleX(0.981)">3:17:11</span></div>
<div class="c r" style="left:946px;top:530px"><span style="transform:scaleX(0.959)">4:42</span></div>
<div class="c l" style="left:1076px;top:530px"><span style="transform:scaleX(0.986)">Female</span></div>
<div class="c r" style="left:36px;top:562px"><span style="transform:scaleX(0.959)">6</span></div>
<div class="c r" style="left:166px;top:562px"><span style="transform:scaleX(0.959)">487</span></div>
<div class="c l" style="left:296px;top:562px"><span style="transform:scaleX(0.955)">Darby Dominguez</span></div>
<div class="c l" style="left:426px;top:562px"><span style="transform:scaleX(0.932)">London</span></div>
<div class="c l" style="left:556px;top:562px"><span style="transform:scaleX(0.948)">ON</span></div>
<div class="c l" style="left:686px;top:562px"><span style="transform:scaleX(0.832)">CA</span></div>
<div class="c r" style="left:816px;top:562px"><span style="transform:scaleX(0.959)">3:22:50</span></div>
<div class="c r" style="left:946px;top:562px"><span style="transform:scaleX(0.959)">4:50</span></div>
<div class="c l" style="left:1076px;top:562px"><span style="transform:scaleX(0.986)">Female</span></div>
<div class="c r" style="left:36px;top:594px"><span style="transform:scaleX(0.959)">7</span></div>
<div class="c r" style="left:166px;top:594px"><span style="transform:scaleX(0.959)">832</span></div>
<div class="c l" style="left:296px;top:594px"><span style="transform:scaleX(1.008)">Margarete Moore</span></div>
<div class="c l" style="left:426px;top:594px"><span style="transform:scaleX(0.932)">London</span></div>
<div class="c l" style="left:556px;top:594px"><span style="transform:scaleX(0.948)">ON</span></div>
<div class="c l" style="left:686px;top:594px"><span style="transform:scaleX(0.832)">CA</span></div>
<div class="c r" style="left:816px;top:594px"><span style="transform:scaleX(0.959)">3:23:33</span></div>
<div class="c r" style="left:946px;top:594px"><span style="transform:scaleX(0.959)">4:51</span></div>
<div class="c l" style="left:1076px;top:594px"><span style="transform:scaleX(0.986)">Female</span></div>
<div class="c r" style="left:36px;top:626px"><span style="transform:scaleX(0.959)">8</span></div>
<div class="c r" style="left:166px;top:626px"><span style="transform:scaleX(0.959)">1905</span></div>
<div class="c l" style="left:296px;top:626px"><span style="transform:scaleX(0.948)">Domenic Dickens</span></div>
<div class="c l" style="left:426px;top:626px"><span style="transform:scaleX(0.921)">Chelsea</span></div>
<div class="c l" style="left:556px;top:626px"><span style="transform:scaleX(0.830)">QC</span></div>
<div class="c l" style="left:686px;top:626px"><span style="transform:scaleX(0.832)">CA</span></div>
<div class="c r" style="left:816px;top:626px"><span style="transform:scaleX(0.959)">3:25:06</span></div>
<div class="c r" style="left:946px;top:626px"><span style="transform:scaleX(0.959)">4:49</span></div>
<div class="c l" style="left:1076px;top:626px"><span style="transform:scaleX(1.025)">Male</span></div>
<div class="c r" style="left:36px;top:658px"><span style="transform:scaleX(0.959)">9</span></div>
<div class="c r" style="left:166px;top:658px"><span style="transform:scaleX(0.959)">1427</span></div>
<div class="c l" style="left:296px;top:658px"><span style="transform:scaleX(1.008)">Albertine Abel</span></div>
<div class="c l" style="left:426px;top:658px"><span style="transform:scaleX(1.028)">Montreal</span></div>
<div class="c l" style="left:556px;top:658px"><span style="transform:scaleX(0.830)">QC</span></div>
<div class="c l" style="left:686px;top:658px"><span style="transform:scaleX(0.832)">CA</span></div>
<div class="c r" style="left:816px;top:658px"><span style="transform:scaleX(0.959)">3:31:04</span></div>
<div class="c r" style="left:946px;top:658px"><span style="transform:scaleX(0.959)">5:00</span></div>
<div class="c l" style="left:1076px;top:658px"><span style="transform:scaleX(1.025)">Male</span></div>
<div class="c r" style="left:36px;top:690px"><span style="transform:scaleX(0.959)">10</span></div>
<div class="c r" style="left:166px;top:690px"><span style="transform:scaleX(0.959)">1390</span></div>
<div class="c l" style="left:296px;top:690px"><span style="transform:scaleX(0.968)">Neda Novotny</span></div>
<div class="c l" style="left:426px;top:690px"><span style="transform:scaleX(1.012)">Toronto</span></div>
<div class="c l" style="left:556px;top:690px"><span style="transform:scaleX(0.948)">ON</span></div>
<div class="c l" style="left:686px;top:690px"><span style="transform:scaleX(0.832)">CA</span></div>
<div class="c r" style="left:816px;top:690px"><span style="transform:scaleX(0.959)">3:33:46</span></div>
<div class="c r" style="left:946px;top:690px"><span style="transform:scaleX(0.959)">5:04</span></div>
<div class="c l" style="left:1076px;top:690px"><span style="transform:scaleX(0.986)">Female</span></div>
<div class="c r" style="left:36px;top:722px"><span style="transform:scaleX(1.027)">11</span></div>
<div class="c r" style="left:166px;top:722px"><span style="transform:scaleX(0.959)">1321</span></div>
<div class="c l" style="left:296px;top:722px"><span style="transform:scaleX(0.985)">Towanda Tyree</span></div>
<div class="c l" style="left:426px;top:722px"><span style="transform:scaleX(1.012)">Toronto</span></div>
<div class="c l" style="left:556px;top:722px"><span style="transform:scaleX(0.948)">ON</span></div>
<div class="c l" style="left:686px;top:722px"><span style="transform:scaleX(0.832)">CA</span></div>
<div class="c r" style="left:816px;top:722px"><span style="transform:scaleX(0.959)">3:41:48</span></div>
<div class="c r" style="left:946px;top:722px"><span style="transform:scaleX(0.959)">5:16</span></div>
<div class="c l" style="left:1076px;top:722px"><span style="transform:scaleX(1.025)">Male</span></div>
<div class="abs" style="left:1060px;top:393px;width:179px;height:107px;border:4px solid #e63b20"></div>
</div></body></html>
